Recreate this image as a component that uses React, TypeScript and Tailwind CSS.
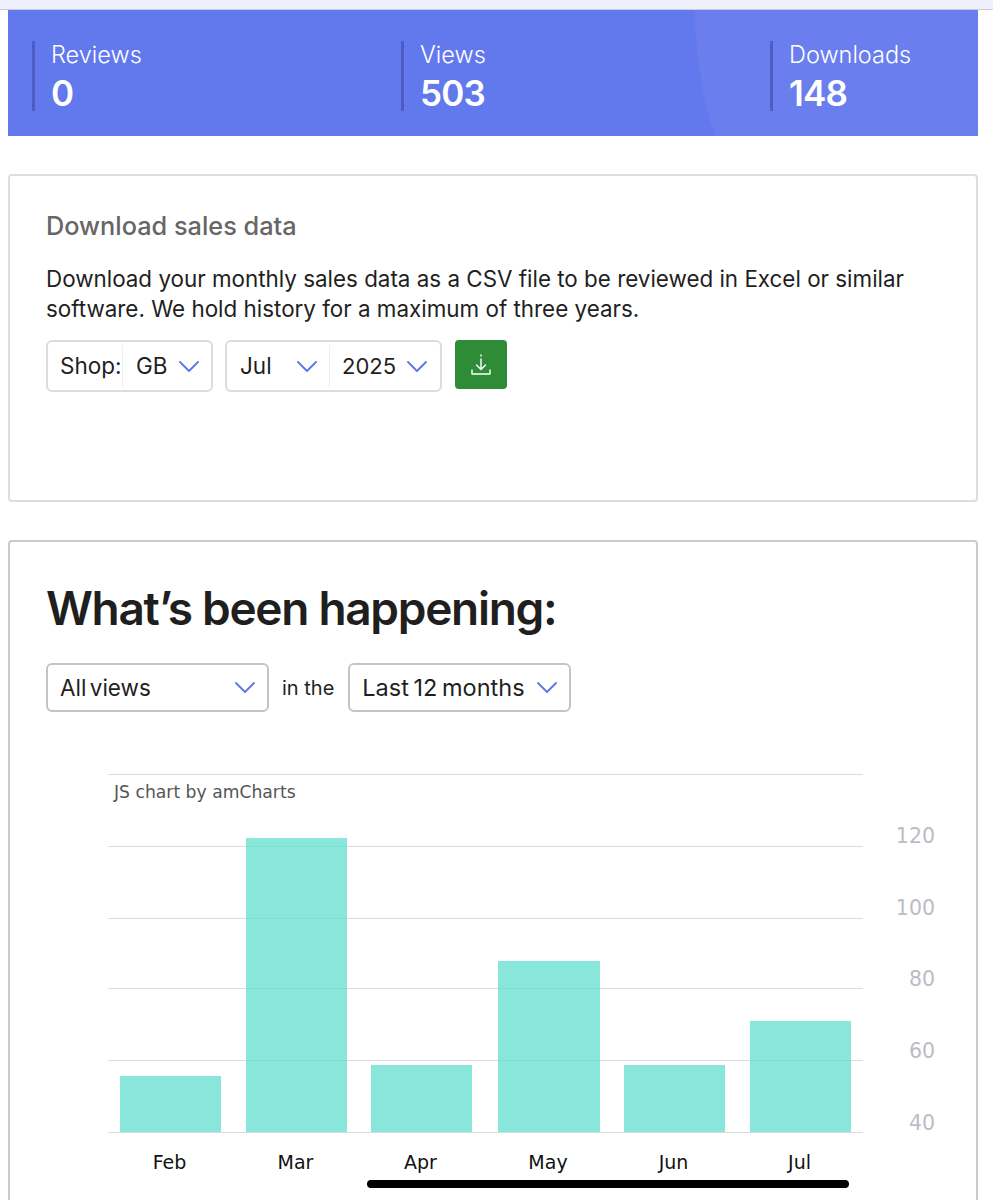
import React from "react";

function Chevron({ className = "" }: { className?: string }) {
  return (
    <svg viewBox="0 0 20 11" width="20" height="11" fill="none" stroke="#5f74e8" strokeWidth="1.8" strokeLinecap="round" strokeLinejoin="round" className={className}>
      <path d="M1 1l9 9 9-9" />
    </svg>
  );
}

function Stat({ label, value }: { label: string; value: string }) {
  return (
    <div className="w-[369px] shrink-0 h-[70px] border-l-[3px] border-[#4c5ec4] pl-[16px] flex flex-col">
      <div className="text-[23.500px] leading-[27px] font-light text-white">{label}</div>
      <div className="mt-[4px] text-[35px] leading-[43px] font-semibold tracking-[-0.8px] text-white">{value}</div>
    </div>
  );
}

const bars = [
  { m: "Feb", x: 120, w: 101, y: 1076 },
  { m: "Mar", x: 246, w: 101, y: 838 },
  { m: "Apr", x: 371, w: 101, y: 1065 },
  { m: "May", x: 498, w: 102, y: 961 },
  { m: "Jun", x: 624, w: 101, y: 1065 },
  { m: "Jul", x: 750, w: 101, y: 1021 },
];
const grid = [774, 846, 918, 988, 1060, 1132];
const yl = [
  ["120", 835],
  ["100", 907],
  ["80", 978],
  ["60", 1050],
  ["40", 1122],
] as const;

export default function App() {
  const top = 750;
  return (
    <div className="relative w-[993px] h-[1200px] overflow-hidden bg-white text-[#1f1f1f] font-['Inter','Noto_Sans',sans-serif]">
      <div className="h-[10px] bg-[#eef0fb] border-b border-[#c9cde0]" />
      <div className="relative ml-[8px] w-[970px] h-[126px] bg-[#6278ed] overflow-hidden pt-[31px] pl-[24px] flex">
        <div className="absolute left-[687px] top-[-407px] w-[814px] h-[814px] rounded-full bg-[#6b7eee]" />
        <div className="relative flex">
          <Stat label="Reviews" value="0" />
          <Stat label="Views" value="503" />
          <Stat label="Downloads" value="148" />
        </div>
      </div>

      <section className="ml-[8px] w-[970px] mt-[38px] h-[328px] rounded-[4px] border-[2px] border-[#dedede] px-[36px] pt-[35px]">
        <h2 className="text-[25.300px] leading-[30px] font-medium text-[#666666]">Download sales data</h2>
        <p className="mt-[23px] text-[22.400px] leading-[30px] text-[#1f1f1f] whitespace-pre-line">
          {"Download your monthly sales data as a CSV file to be reviewed in Excel or similar\nsoftware. We hold history for a maximum of three years."}
        </p>
        <div className="mt-[16px] flex items-start">
          <div className="w-[167px] h-[52px] rounded-[6px] border-[2px] border-[#dcdcdc] flex items-center relative">
            <span className="pl-[12px] text-[22.500px]">Shop:</span>
            <div className="absolute left-[74px] top-0 bottom-0 right-0 rounded-[6px] border-l border-[#eeeeee] flex items-center pl-[13px] gap-[11px]">
              <span className="text-[22.500px]">GB</span>
              <Chevron />
            </div>
          </div>
          <div className="ml-[12px] w-[217px] h-[52px] rounded-[6px] border-[2px] border-[#dcdcdc] flex items-center">
            <div className="w-[103px] h-full flex items-center pl-[13px] justify-between pr-[12px] border-r border-[#eeeeee] rounded-[6px]">
              <span className="text-[22.500px]">Jul</span>
              <Chevron />
            </div>
            <div className="flex items-center pl-[12px] gap-[11px]">
              <span className="text-[22px]">2025</span>
              <Chevron />
            </div>
          </div>
          <div className="ml-[13px] w-[52px] h-[49px] rounded-[4px] bg-[#2e8b36] flex items-center justify-center">
            <svg viewBox="0 0 24 24" width="24" height="24" fill="none" stroke="#ffffff" strokeWidth="1.4" strokeLinecap="round" strokeLinejoin="round">
              <path d="M12 2v1M12 6v10M7.500 12l4.500 4.500 4.500-4.500M3 17v4h18v-4" />
            </svg>
          </div>
        </div>
      </section>

      <section className="ml-[8px] w-[970px] mt-[38px] h-[700px] rounded-[4px] border-[2px] border-[#cbcbcb] px-[36px] pt-[36px]">
        <h1 className="text-[46px] leading-[60px] font-semibold tracking-[-1.300px] text-[#1f1f1f]">What’s been happening:</h1>
        <div className="mt-[25px] flex items-center">
          <div className="w-[223px] h-[49px] rounded-[6px] border-[2px] border-[#c4c4c4] flex items-center justify-between pl-[12px] pr-[12px]">
            <span className="text-[22.500px] [word-spacing:-3px]">All views</span>
            <Chevron />
          </div>
          <span className="ml-[13px] mr-[14px] text-[20px]">in the</span>
          <div className="w-[223px] h-[49px] rounded-[6px] border-[2px] border-[#c4c4c4] flex items-center justify-between pl-[12px] pr-[12px]">
            <span className="text-[23.500px] whitespace-nowrap [word-spacing:-2px]">Last 12 months</span>
            <Chevron />
          </div>
        </div>
        <svg width="900" height="440" viewBox={`46 ${top} 900 440`} className="block mt-[38px] font-['DejaVu_Sans',sans-serif]">
          {grid.map((g) => (
            <line key={g} x1="108" x2="863" y1={g + 0.5} y2={g + 0.5} stroke="#dcdcdc" />
          ))}
          <text x="114" y="798" fontSize="17.200" fill="#555555">JS chart by amCharts</text>
          {bars.map((b) => (
            <g key={b.m}>
              <rect x={b.x} y={b.y} width={b.w} height={1132 - b.y} fill="#67dfd1" fillOpacity="0.78" />
              <text x={b.x + b.w / 2 - 1} y="1169" fontSize="19" fill="#111111" textAnchor="middle">{b.m}</text>
            </g>
          ))}
          {yl.map(([t, y]) => (
            <text key={t} x="935" y={y + 8} fontSize="20.500" fill="#bcbcc4" textAnchor="end">{t}</text>
          ))}
        </svg>
      </section>
      <div className="absolute left-[367px] top-[1180px] w-[482px] h-[8px] rounded-full bg-black" />
    </div>
  );
}
